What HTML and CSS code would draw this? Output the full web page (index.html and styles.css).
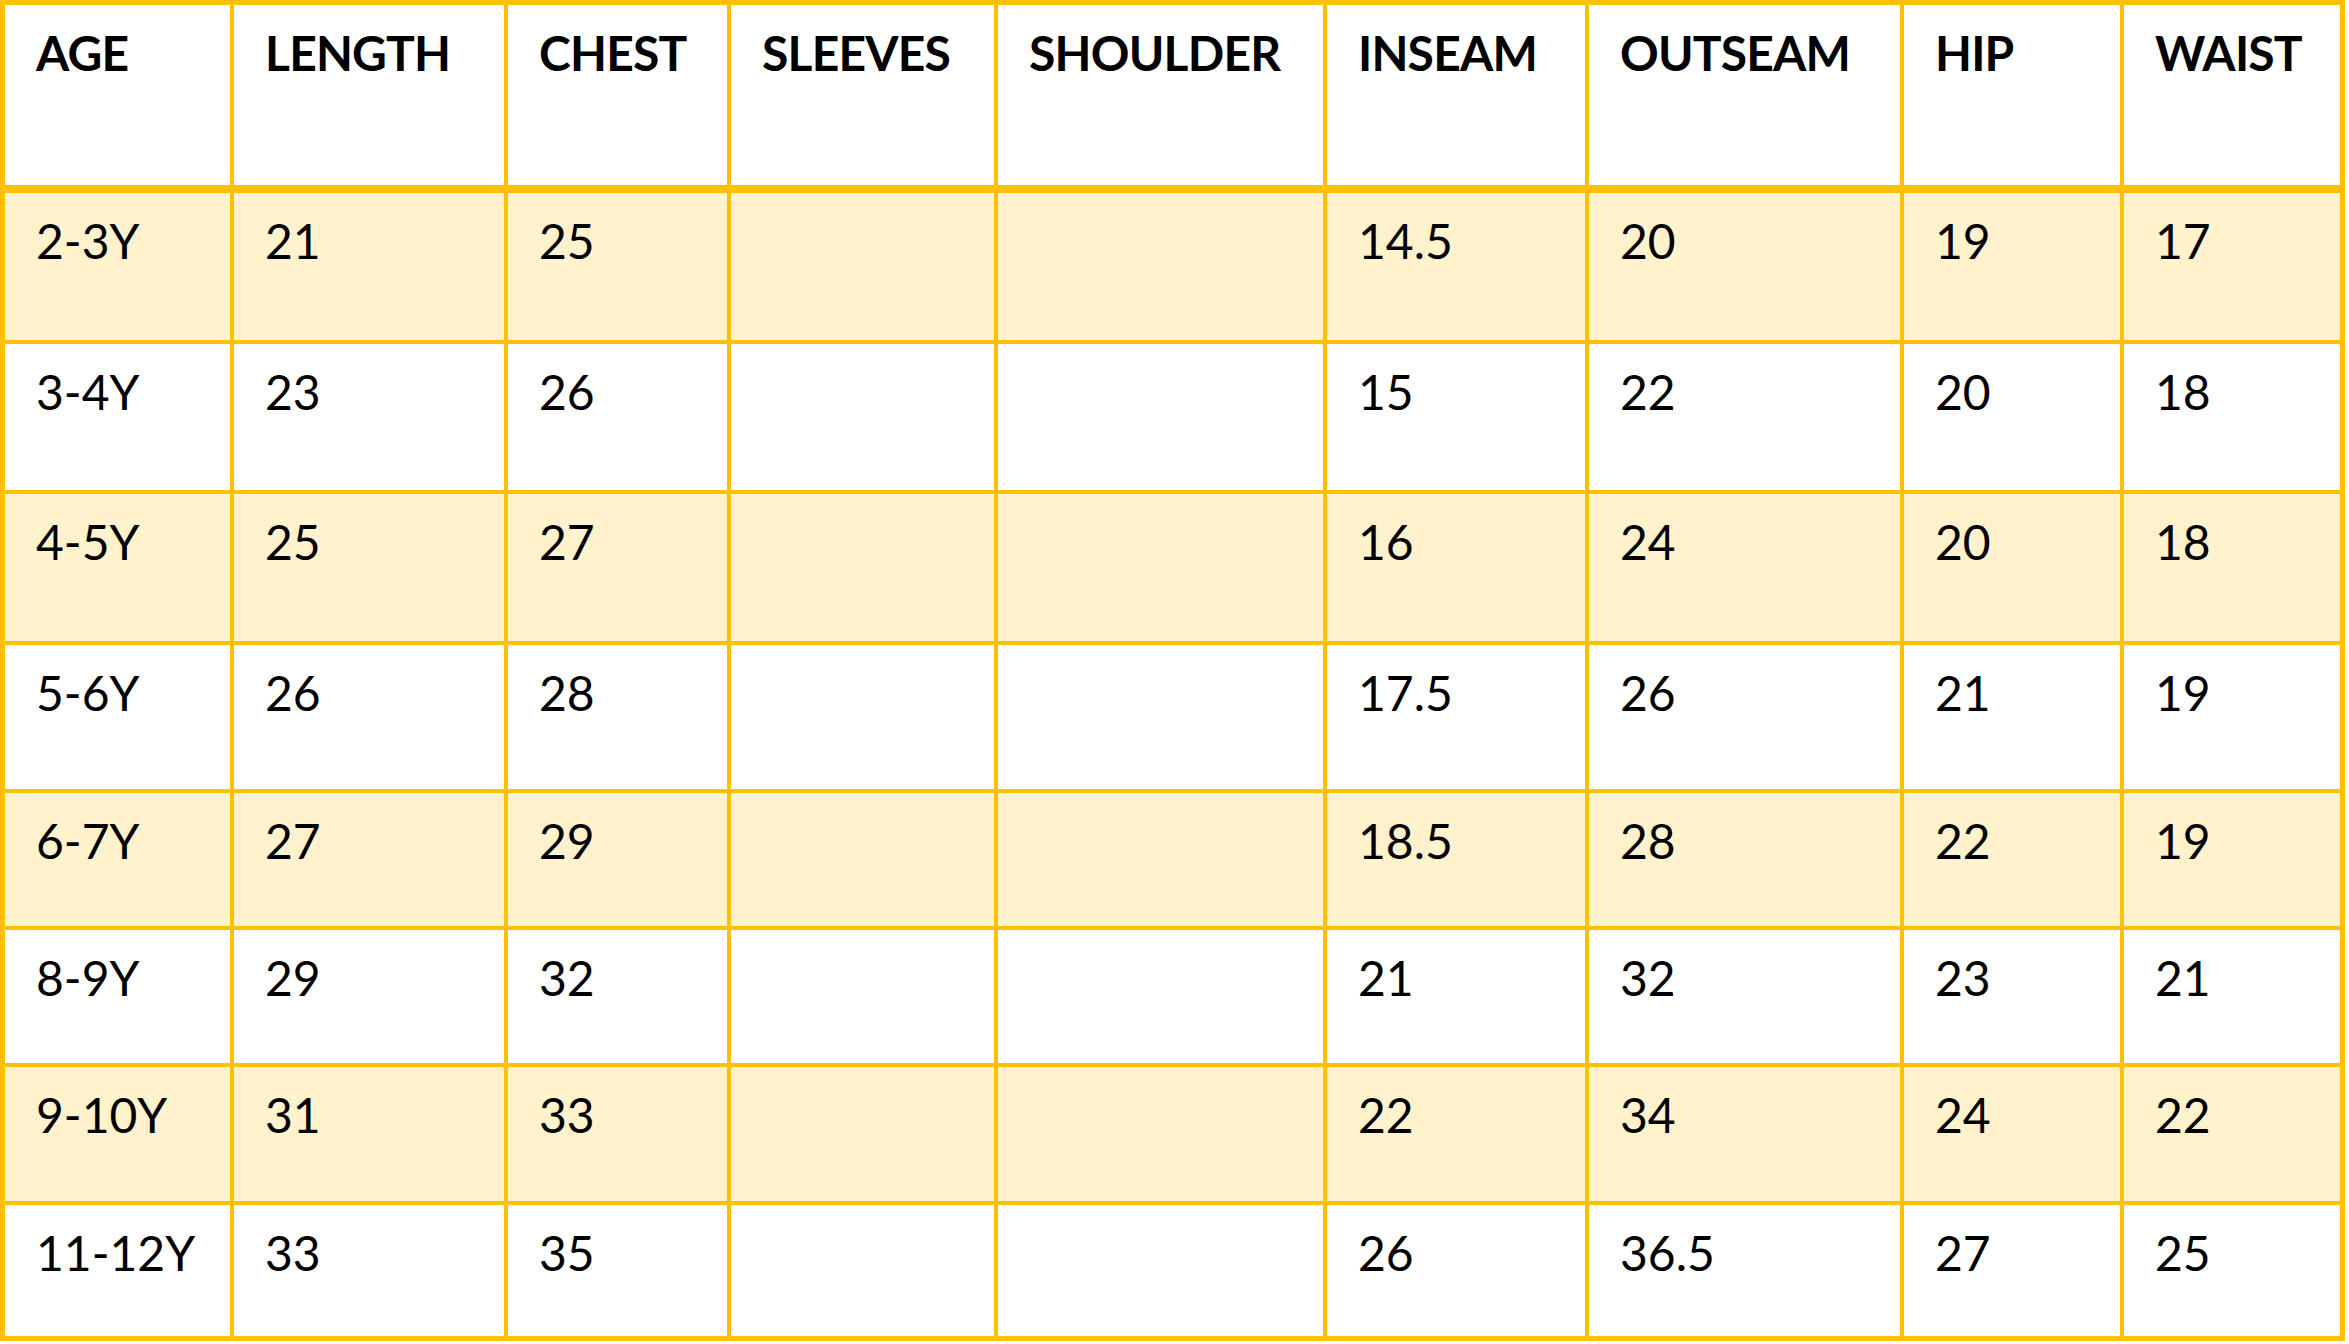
FILE: index.html
```html
<!DOCTYPE html>
<html lang="en">
<head>
<meta charset="utf-8">
<title>Size Chart</title>
<link rel="stylesheet" href="styles.css">
</head>
<body>
<div class="chart" role="table">
  <div class="cell head">AGE</div>
  <div class="cell head">LENGTH</div>
  <div class="cell head">CHEST</div>
  <div class="cell head">SLEEVES</div>
  <div class="cell head">SHOULDER</div>
  <div class="cell head">INSEAM</div>
  <div class="cell head">OUTSEAM</div>
  <div class="cell head">HIP</div>
  <div class="cell head">WAIST</div>

  <div class="cell alt">2-3Y</div><div class="cell alt">21</div><div class="cell alt">25</div><div class="cell alt"></div><div class="cell alt"></div><div class="cell alt">14.5</div><div class="cell alt">20</div><div class="cell alt">19</div><div class="cell alt">17</div>

  <div class="cell">3-4Y</div><div class="cell">23</div><div class="cell">26</div><div class="cell"></div><div class="cell"></div><div class="cell">15</div><div class="cell">22</div><div class="cell">20</div><div class="cell">18</div>

  <div class="cell alt">4-5Y</div><div class="cell alt">25</div><div class="cell alt">27</div><div class="cell alt"></div><div class="cell alt"></div><div class="cell alt">16</div><div class="cell alt">24</div><div class="cell alt">20</div><div class="cell alt">18</div>

  <div class="cell">5-6Y</div><div class="cell">26</div><div class="cell">28</div><div class="cell"></div><div class="cell"></div><div class="cell">17.5</div><div class="cell">26</div><div class="cell">21</div><div class="cell">19</div>

  <div class="cell alt">6-7Y</div><div class="cell alt">27</div><div class="cell alt">29</div><div class="cell alt"></div><div class="cell alt"></div><div class="cell alt">18.5</div><div class="cell alt">28</div><div class="cell alt">22</div><div class="cell alt">19</div>

  <div class="cell">8-9Y</div><div class="cell">29</div><div class="cell">32</div><div class="cell"></div><div class="cell"></div><div class="cell">21</div><div class="cell">32</div><div class="cell">23</div><div class="cell">21</div>

  <div class="cell alt">9-10Y</div><div class="cell alt">31</div><div class="cell alt">33</div><div class="cell alt"></div><div class="cell alt"></div><div class="cell alt">22</div><div class="cell alt">34</div><div class="cell alt">24</div><div class="cell alt">22</div>

  <div class="cell">11-12Y</div><div class="cell">33</div><div class="cell">35</div><div class="cell"></div><div class="cell"></div><div class="cell">26</div><div class="cell">36.5</div><div class="cell">27</div><div class="cell">25</div>
</div>
</body>
</html>
```
FILE: styles.css
```css
html, body {
  margin: 0;
  padding: 0;
  background: #ffffff;
}

.chart {
  display: inline-grid;
  box-sizing: border-box;
  width: 2345px;
  padding: 5px;
  background: #FFC000;
  grid-template-columns: 225px 270px 219px 263px 325px 258px 311px 216px 216px;
  grid-template-rows: 184px 147px 146px 147px 144px 133px 133px 134px 131px;
  column-gap: 4px;
  row-gap: 4px;
  font-family: "Lato", "Liberation Sans", sans-serif;
  font-size: 48px;
  line-height: 1.2;
  color: #000000;
}

.cell {
  background: #ffffff;
  padding: 19px 0 0 31px;
  box-sizing: border-box;
  white-space: nowrap;
}

.head {
  font-weight: 700;
  letter-spacing: -0.8px;
  margin-bottom: 4px;
}

.alt {
  background: #FFF2CC;
}
```
